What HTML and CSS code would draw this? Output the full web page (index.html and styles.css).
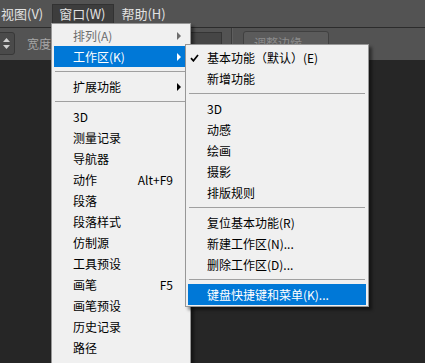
FILE: index.html
```html
<!DOCTYPE html>
<html lang="zh-CN">
<head>
  <meta charset="UTF-8">
  <title>窗口菜单</title>
  <link rel="stylesheet" href="styles.css">
</head>
<body>
  <div class="menubar">
    <div class="mb-item first">视图(V)</div>
    <div class="mb-item open">窗口(W)</div>
    <div class="mb-item">帮助(H)</div>
  </div>

  <div class="options">
    <div class="spinner">
      <svg width="7" height="11" viewBox="0 0 7 11">
        <path d="M3.5 0 L7 4 L0 4 Z M3.5 11 L7 7 L0 7 Z" fill="#d0d0d0"/>
      </svg>
    </div>
    <span class="opt-label">宽度</span>
    <div class="opt-input"></div>
    <div class="opt-sep"></div>
    <div class="opt-btn">调整边缘...</div>
  </div>

  <div class="workspace"></div>

  <ul class="menu window-menu">
    <li class="item disabled"><span class="label">排列(A)</span><span class="arrow"></span></li>
    <li class="item active"><span class="label">工作区(K)</span><span class="arrow"></span></li>
    <li class="sep"></li>
    <li class="item"><span class="label">扩展功能</span><span class="arrow"></span></li>
    <li class="sep"></li>
    <li class="item"><span class="label">3D</span></li>
    <li class="item"><span class="label">测量记录</span></li>
    <li class="item"><span class="label">导航器</span></li>
    <li class="item"><span class="label">动作</span><span class="key">Alt+F9</span></li>
    <li class="item"><span class="label">段落</span></li>
    <li class="item"><span class="label">段落样式</span></li>
    <li class="item"><span class="label">仿制源</span></li>
    <li class="item"><span class="label">工具预设</span></li>
    <li class="item"><span class="label">画笔</span><span class="key">F5</span></li>
    <li class="item"><span class="label">画笔预设</span></li>
    <li class="item"><span class="label">历史记录</span></li>
    <li class="item"><span class="label">路径</span></li>
  </ul>

  <ul class="menu sub-menu">
    <li class="item">
      <span class="check">
        <svg width="9" height="8" viewBox="0 0 9 8">
          <path d="M1 4.2 L3.4 6.8 L8 1" fill="none" stroke="#000" stroke-width="1.7"/>
        </svg>
      </span>
      <span class="label">基本功能（默认）(E)</span>
    </li>
    <li class="item"><span class="label">新增功能</span></li>
    <li class="sep"></li>
    <li class="item"><span class="label">3D</span></li>
    <li class="item"><span class="label">动感</span></li>
    <li class="item"><span class="label">绘画</span></li>
    <li class="item"><span class="label">摄影</span></li>
    <li class="item"><span class="label">排版规则</span></li>
    <li class="sep"></li>
    <li class="item"><span class="label">复位基本功能(R)</span></li>
    <li class="item"><span class="label">新建工作区(N)...</span></li>
    <li class="item"><span class="label">删除工作区(D)...</span></li>
    <li class="sep"></li>
    <li class="item active"><span class="label">键盘快捷键和菜单(K)...</span></li>
  </ul>
</body>
</html>
```

FILE: styles.css
```css
body {
  margin: 0;
  height: 100vh;
  overflow: hidden;
  position: relative;
  display: flex;
  flex-direction: column;
  background: #262626;
  font-family: "Noto Sans CJK SC", "Liberation Sans", sans-serif;
}

/* top menu bar */
.menubar {
  height: 28px;
  display: flex;
  align-items: flex-start;
  padding-top: 4px;
  box-sizing: border-box;
  background: #535353;
  border-bottom: 1px solid #2c2c2c;
}
.mb-item {
  height: 19px;
  line-height: 18px;
  padding: 0 8px 0 6px;
  border: 1px solid transparent;
  font-size: 13px;
  color: #e2e2e2;
}
.mb-item.first {
  padding-left: 0;
}
.mb-item.open {
  background: #3d3d3d;
  border-color: #323232;
}

/* options bar */
.options {
  height: 32px;
  display: flex;
  align-items: flex-start;
  background: #535353;
}
.spinner {
  margin-left: -10px;
  margin-top: 4px;
  width: 25px;
  height: 23px;
  box-sizing: border-box;
  display: flex;
  align-items: center;
  justify-content: flex-end;
  padding-right: 4px;
  background: #4a4a4a;
  border: 1px solid #383838;
  border-radius: 3px;
}
.opt-label {
  margin-left: 12px;
  margin-top: 6px;
  font-size: 12px;
  line-height: 20px;
  color: #a6a6a6;
}
.opt-input {
  margin-left: 9px;
  margin-top: 4px;
  width: 162px;
  height: 23px;
  box-sizing: border-box;
  background: #464646;
  border: 1px solid #353535;
}
.opt-sep {
  margin-left: 9px;
  width: 1px;
  height: 32px;
  background: #3c3c3c;
  border-right: 1px solid #5e5e5e;
}
.opt-btn {
  margin-left: 10px;
  margin-top: 3px;
  width: 86px;
  height: 24px;
  box-sizing: border-box;
  padding-left: 10px;
  font-size: 12px;
  line-height: 22px;
  color: #8c8c8c;
  background: #5b5b5b;
  border: 1px solid #404040;
  border-radius: 3px;
}

.workspace {
  flex: 1;
  background: #262626;
}

/* drop-down menus */
.menu {
  position: absolute;
  list-style: none;
  margin: 0;
  box-sizing: border-box;
  background: #f0f0f0;
  border: 1px solid #979797;
  box-shadow: 3px 3px 3px rgba(0, 0, 0, 0.45);
  font-size: 12px;
  color: #000;
}
.window-menu {
  left: 51px;
  top: 23px;
  width: 140px;
  padding: 1px 0 30px;
}
.sub-menu {
  left: 185px;
  top: 44px;
  width: 184px;
  padding: 2px 0 1px;
}
.item {
  height: 21px;
  margin: 0 2px;
  display: grid;
  grid-template-columns: 19px 1fr auto 15px;
  align-items: center;
  line-height: 21px;
  white-space: nowrap;
}
.item .label {
  grid-column: 2;
}
.item .key {
  grid-column: 3;
}
.item .arrow {
  grid-column: 4;
  justify-self: start;
  margin-left: 4px;
  width: 0;
  height: 0;
  border-left: 4px solid #000;
  border-top: 4px solid transparent;
  border-bottom: 4px solid transparent;
}
.item .check {
  grid-column: 1;
  display: flex;
  padding-left: 2px;
}
.item.disabled {
  color: #6d6d6d;
}
.item.disabled .arrow {
  border-left-color: #6d6d6d;
}
.item.active {
  background: #0078d7;
  color: #fff;
}
.item.active .arrow {
  border-left-color: #fff;
}
.sep {
  height: 1px;
  margin: 4px 3px;
  background: #a0a0a0;
}
```
